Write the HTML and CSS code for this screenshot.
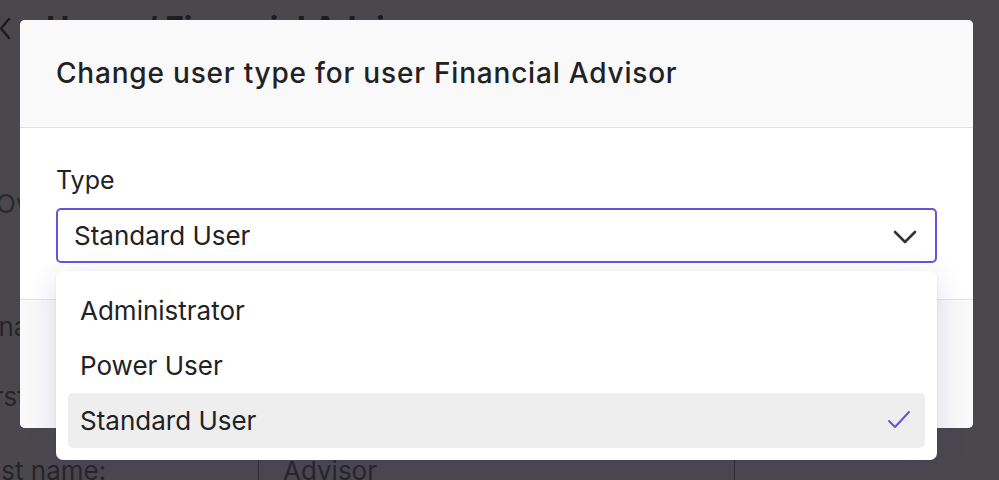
FILE: index.html
```html
<!DOCTYPE html>
<html lang="en">
<head>
<meta charset="utf-8">
<title>Change user type</title>
<link rel="stylesheet" href="styles.css">
</head>
<body>
<div class="page">
  <div class="page-head">
    <svg class="back" width="12" height="22" viewBox="0 0 12 22"><polyline points="9,1 1,10.5 9,20" fill="none" stroke="#1d1c20" stroke-width="2.5" stroke-linecap="round" stroke-linejoin="round"/></svg>
    <h1 class="crumbs">Users / Financial Advisor</h1>
  </div>
  <nav class="tabs"><span class="tab">Overview</span></nav>
  <div class="fields">
    <div class="field"><span class="f-label f-user">Username:</span><span class="f-value">advisor</span></div>
    <div class="field"><span class="f-label">First name:</span><span class="f-value">Financial</span></div>
    <div class="field last"><span class="f-label">Last name:</span><span class="f-value">Advisor</span></div>
  </div>
</div>

<div class="modal" role="dialog">
  <header class="modal-head">
    <h2 class="modal-title">Change user type for user Financial Advisor</h2>
  </header>
  <section class="modal-body">
    <label class="label">Type</label>
    <div class="select-wrap">
      <div class="select">
        <span>Standard User</span>
        <svg class="chev" width="24" height="14" viewBox="0 0 24 14"><polyline points="2,2 12,12 22,2" fill="none" stroke="#333" stroke-width="2.6" stroke-linecap="round" stroke-linejoin="round"/></svg>
      </div>
      <ul class="menu">
        <li class="item">Administrator</li>
        <li class="item">Power User</li>
        <li class="item selected">Standard User
          <svg class="check" width="24" height="20" viewBox="0 0 24 20"><polyline points="2,11 8,17 22,2" fill="none" stroke="#6a51d6" stroke-width="2" stroke-linecap="round" stroke-linejoin="round"/></svg>
        </li>
      </ul>
    </div>
  </section>
  <footer class="modal-foot">
    <button class="btn">Cancel</button>
    <button class="btn primary">Save</button>
  </footer>
</div>
</body>
</html>
```
FILE: styles.css
```css
* { box-sizing: border-box; }
html, body { margin: 0; padding: 0; }
body {
  width: 999px;
  height: 480px;
  overflow: hidden;
  background: #4a484d;
  font-family: Inter, "Noto Sans", sans-serif;
  color: #1d1c20;
  position: relative;
}

/* background page (under overlay) */
.page { margin-left: -4px; height: 480px; overflow: hidden; }
.page-head {
  display: flex;
  align-items: center;
  gap: 34px;
  height: 58px;
  padding-left: 4px;
}
.back { flex: none; }
.crumbs {
  margin: 0;
  font-size: 32px;
  font-weight: 700;
  color: #1d1c20;
  position: relative;
  top: -1px;
}
.tabs {
  padding-top: 131px;
  font-size: 26px;
  line-height: 30px;
  color: #2a292c;
}
.fields {
  margin-left: -24px;
  padding-top: 93px;
  display: flex;
  flex-direction: column;
  gap: 40px;
  font-size: 26px;
  line-height: 30px;
  color: #262529;
}
.field { display: flex; height: 30px; }
.f-label { width: 287px; }
.f-user { margin-left: -32px; width: 319px; }
.f-value { padding-left: 24px; width: 476px; }
.field.last { height: 40px; }
.field.last .f-label { border-right: 1.5px solid #2e2d31; }
.field.last .f-value { border-right: 1.5px solid #2e2d31; }
.field.last span { padding-top: 4px; }

/* modal */
.modal {
  position: absolute;
  left: 20px;
  top: 20px;
  width: 953px;
  height: 408px;
  border-radius: 5px;
  background: #fff;
  display: flex;
  flex-direction: column;
}
.modal-head {
  background: #f9f9f9;
  padding: 36px;
  border-bottom: 1px solid #e2e2e2;
  border-radius: 5px 5px 0 0;
}
.modal-title {
  margin: 0;
  font-size: 28px;
  line-height: 35px;
  font-weight: 500;
  letter-spacing: 0.8px;
  color: #222124;
}
.modal-body {
  padding: 36px;
  display: flex;
  flex-direction: column;
  gap: 12px;
  border-bottom: 1px solid #e2e2e2;
}
.label {
  font-size: 25px;
  line-height: 32px;
  color: #232226;
}
.select-wrap { position: relative; }
.select {
  height: 55px;
  border: 2px solid #6b52d8;
  border-radius: 5px;
  display: flex;
  align-items: center;
  justify-content: space-between;
  padding: 0 18px 0 16px;
  font-size: 26px;
  color: #222124;
}
.chev { margin-top: 2px; }
.menu {
  position: absolute;
  left: 0;
  right: 0;
  top: calc(100% + 8px);
  margin: 0;
  padding: 12px;
  list-style: none;
  background: #fff;
  border-radius: 7px;
  box-shadow: 0 6px 28px rgba(70, 50, 140, 0.16), 0 1px 3px rgba(0,0,0,0.06);
  z-index: 2;
}
.item {
  height: 55px;
  display: flex;
  align-items: center;
  justify-content: space-between;
  padding: 0 14px 0 12px;
  font-size: 26px;
  color: #222124;
  border-radius: 5px;
}
.item.selected { background: #eeeeee; }
.check { margin-top: -2px; }
.modal-foot {
  flex: 1;
  background: #f9f9f9;
  border-radius: 0 0 5px 5px;
  display: flex;
  justify-content: flex-end;
  align-items: center;
  gap: 12px;
  padding: 0 36px;
}
.btn {
  font-family: inherit;
  font-size: 22px;
  height: 52px;
  padding: 0 24px;
  border-radius: 5px;
  border: 1px solid #d6d6d6;
  background: #fff;
  color: #222;
}
.btn.primary { background: #6b52d8; border-color: #6b52d8; color: #fff; }
```
